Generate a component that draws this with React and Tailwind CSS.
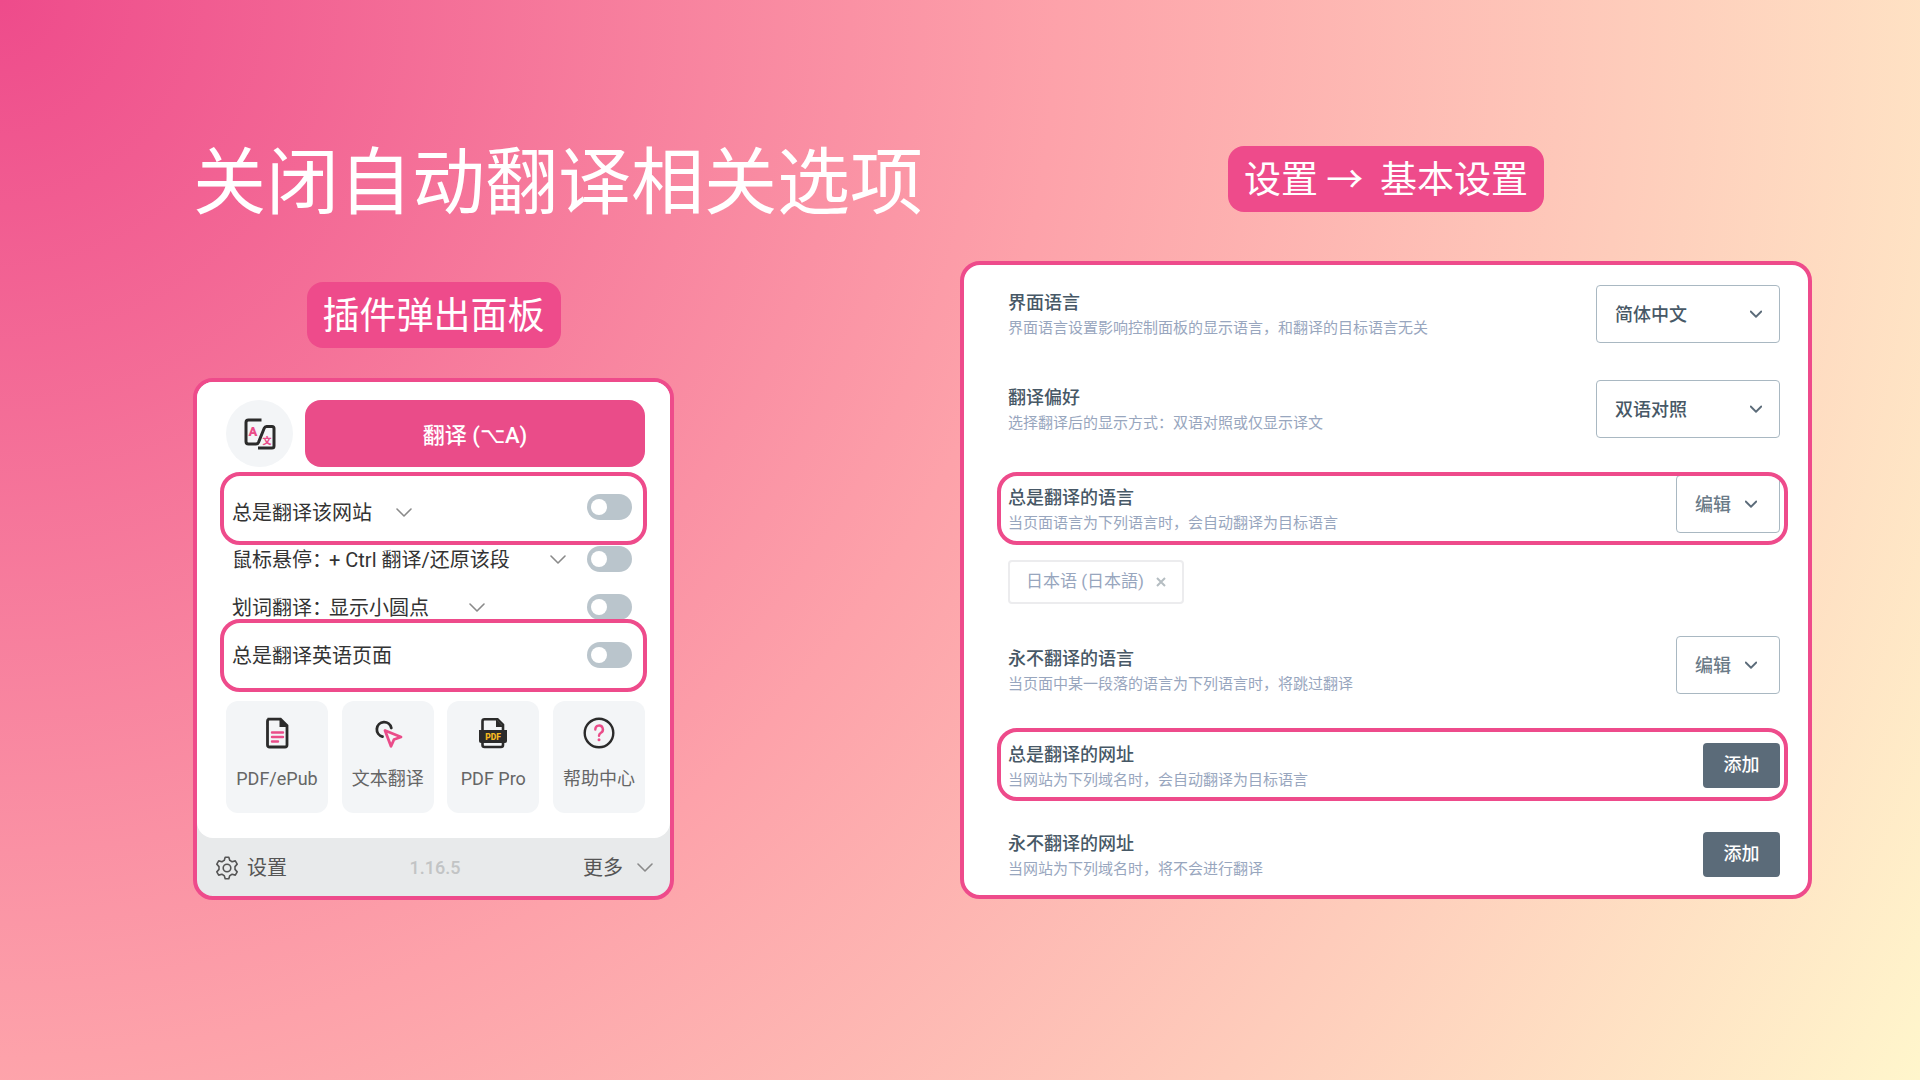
import React, { useState } from "react";

const POPUP_TILES = [
  { id: "epub", label: "PDF/ePub", icon: "doc", width: "w-[102px]" },
  { id: "text", label: "文本翻译", icon: "cursor", width: "w-[92px]" },
  { id: "pro", label: "PDF Pro", icon: "pdf", width: "w-[92px]" },
  { id: "help", label: "帮助中心", icon: "help", width: "w-[92px]" },
];

/* ─────────────────────────────────────────
   Icons
───────────────────────────────────────── */
const Chevron = ({ className, width = 2 }) => (
  <svg viewBox="0 0 16 10" className={className} fill="none" stroke="currentColor" strokeWidth={width} aria-hidden="true">
    <path d="M1 1l7 7 7-7" strokeLinecap="round" strokeLinejoin="round" />
  </svg>
);

const LogoIcon = () => (
  <svg viewBox="0 0 32 32" className="w-8 h-8" fill="none" stroke="#2b2b2b" strokeWidth="3" aria-hidden="true">
    <path d="M17.500 2H4.500Q2 2 2 4.500v19Q2 26 4.500 26H12q1.800 0 2.500-1.600L20.300 10Q21 8.400 22.500 8.400H28q2 0 2 2V28q0 2-2 2H14" />
    <text x="4.500" y="17.500" fontSize="13" fontWeight="900" fill="#ea4c89" stroke="none" fontFamily="Roboto">A</text>
    <text x="18.500" y="26" fontSize="9" fontWeight="900" fill="#ea4c89" stroke="none" fontFamily="Noto Sans CJK SC">文</text>
  </svg>
);

const GearIcon = () => (
  <svg viewBox="0 0 24 24" className="w-6 h-6" fill="none" stroke="currentColor" strokeWidth="1.6" strokeLinejoin="round" aria-hidden="true">
    <path d="M10.200 1.200h3.600l1 3.200 2.300 1.300 3.200-.8 1.900 3.200-2.200 2.500v2.800l2.200 2.500-1.900 3.200-3.200-.8-2.300 1.300-1 3.200h-3.600l-1-3.200-2.300-1.300-3.200.8-1.900-3.200 2.200-2.500v-2.800L1.800 8.100l1.900-3.200 3.200.8 2.300-1.300z" />
    <circle cx="12" cy="12" r="3.800" />
  </svg>
);

const TileIcon = ({ name }) => {
  if (name === "doc") {
    return (
      <svg viewBox="0 0 32 32" className="w-8 h-8" fill="none" strokeWidth="2.800" aria-hidden="true">
        <path d="M6.500 2.200h13l6.500 6.500v19.300q0 2-2 2h-15.500q-2 0-2-2V4.200q0-2 2-2z" stroke="#2b2b2b" />
        <path d="M18.500 2v8h8z" fill="#2b2b2b" />
        <path d="M11 15.500h11M11 20h11M11 24.500h6" stroke="#ea4c89" strokeWidth="2.400" strokeLinecap="round" />
      </svg>
    );
  }
  if (name === "cursor") {
    return (
      <svg viewBox="0 0 32 32" className="w-8 h-8" fill="none" strokeWidth="2.800" strokeLinecap="round" strokeLinejoin="round" aria-hidden="true">
        <path d="M10.500 19.600A7.300 7.300 0 1 1 19.300 11" stroke="#2b2b2b" />
        <path d="M13 13.500l16 6.500-7 2.500-3 6.800z" stroke="#ea4c89" />
      </svg>
    );
  }
  if (name === "pdf") {
    return (
      <svg viewBox="0 0 32 32" className="w-8 h-8" fill="none" strokeWidth="2.600" aria-hidden="true">
        <path d="M7.500 2.200h13l5.500 5.500v20.300q0 2-2 2H7.500q-2 0-2-2V4.200q0-2 2-2z" stroke="#2b2b2b" />
        <path d="M19 2v8h7.500z" fill="#2b2b2b" />
        <path d="M2 13h28v11q0 2-2 2H4q-2 0-2-2z" fill="#2b2b2b" />
        <text x="16" y="22.500" textAnchor="middle" fontSize="8.500" fontWeight="900" fill="#f5b921" fontFamily="Roboto">PDF</text>
      </svg>
    );
  }
  return (
    <svg viewBox="0 0 32 32" className="w-8 h-8" fill="none" strokeWidth="2.400" strokeLinecap="round" aria-hidden="true">
      <circle cx="16" cy="16" r="14.300" stroke="#2b2b2b" />
      <path d="M12.300 12.500a3.800 3.800 0 1 1 5.700 3.200q-2 1.100-2 3.100" stroke="#ea4c89" />
      <circle cx="16" cy="22.800" r="1.500" fill="#ea4c89" />
    </svg>
  );
};

/* ─────────────────────────────────────────
   Shared pieces
───────────────────────────────────────── */
const Badge = ({ children }) => (
  <h2 className="h-[66px] px-4 rounded-2xl bg-[#ee4b8b] text-white text-[37px] leading-[62px] whitespace-pre">{children}</h2>
);

// Ring drawn over a row to call it out
const Ring = ({ className }) => (
  <span aria-hidden="true" className={`absolute h-[73px] border-4 border-[#ee4b8b] rounded-[20px] pointer-events-none ${className}`} />
);

const Toggle = ({ label }) => {
  const [on, setOn] = useState(false);
  return (
    <input
      type="checkbox"
      role="switch"
      aria-label={label}
      checked={on}
      onChange={() => setOn(!on)}
      className="relative appearance-none shrink-0 w-[45px] h-[26px] rounded-full bg-[#bac5cc] checked:bg-[#ee4b8b] before:absolute before:top-[5px] before:left-[4px] before:w-4 before:h-4 before:rounded-full before:bg-white checked:before:left-[25px]"
    />
  );
};

const InlineSelect = ({ label, value, space }) => (
  <span className="relative inline-flex items-center">
    <select aria-label={label} className={`appearance-none field-sizing-content bg-transparent ${space}`}>
      <option>{value}</option>
    </select>
    <Chevron className="absolute right-0 w-4 h-[10px] text-[#8a8a8a] pointer-events-none" width={1.6} />
  </span>
);

const HoverRow = ({ title, value, className }) => (
  <div className={`flex items-center justify-between ${className}`}>
    <div className="flex pt-[2px]">
      <span className="w-[97px] whitespace-nowrap">{title}：</span>
      <InlineSelect label={title} value={value} space="pr-14" />
    </div>
    <Toggle label={title} />
  </div>
);

/* ─────────────────────────────────────────
   Extension popup
───────────────────────────────────────── */
const PopupPanel = () => (
  <section className="w-full rounded-[20px] border-4 border-[#ee4b8b] bg-[#e8eaeb] overflow-hidden font-['Roboto','Noto_Sans_CJK_SC',sans-serif] text-xl leading-[26px] text-[#333]">
    <div className="bg-white rounded-b-2xl pl-[29px] pr-[25px] pt-[18px] pb-[25px]">
      <div className="flex gap-3">
        <button aria-label="语言" className="flex items-center justify-center shrink-0 w-[67px] h-[67px] rounded-full bg-[#f3f5f7]">
          <LogoIcon />
        </button>
        <button className="flex-1 h-[67px] pt-1 rounded-2xl bg-[#ea4c89] text-white text-[22px] font-medium">翻译 (⌥A)</button>
      </div>

      <div className="pl-[6px] pr-[13px]">
        <div className="relative flex items-start justify-between mt-[27px]">
          <div className="flex pt-[6px]">
            <InlineSelect label="网站规则" value="总是翻译该网站" space="pr-10" />
          </div>
          <Toggle label="总是翻译该网站" />
          <Ring className="-left-3 -right-[15px] -top-[22px]" />
        </div>
        <HoverRow title="鼠标悬停" value="+ Ctrl 翻译/还原该段" className="mt-[19px]" />
        <HoverRow title="划词翻译" value="显示小圆点" className="mt-5" />
        <div className="relative flex items-center justify-between mt-5">
          <span className="pt-[2px]">总是翻译英语页面</span>
          <Toggle label="总是翻译英语页面" />
          <Ring className="-left-3 -right-[15px] -top-[22px]" />
        </div>
      </div>

      <div className="flex justify-between mt-8">
        {POPUP_TILES.map(tile => (
          <button key={tile.id} className={`flex flex-col items-center h-[112px] pt-4 rounded-xl bg-[#f3f5f7] text-lg leading-6 text-[#666] whitespace-nowrap ${tile.width}`}>
            <TileIcon name={tile.icon} />
            <span className="mt-[18px]">{tile.label}</span>
          </button>
        ))}
      </div>
    </div>

    <footer className="flex items-center justify-between h-[58px] pt-px pl-[18px] pr-[17px] text-[#555]">
      <button className="flex items-center gap-2">
        <GearIcon />
        <span>设置</span>
      </button>
      <span className="text-lg font-medium text-[#c2c4c5]">1.16.5</span>
      <button className="flex items-center gap-[14px]">
        <span>更多</span>
        <Chevron className="w-4 h-[10px] text-[#8a8a8a]" width={1.6} />
      </button>
    </footer>
  </section>
);

/* ─────────────────────────────────────────
   Settings page
───────────────────────────────────────── */
const SettingText = ({ title, desc, id, className }) => (
  <div className={className}>
    <label htmlFor={id} className="block text-lg leading-[26px] font-medium text-[#475866]">{title}</label>
    <p className="text-[15px] leading-6 text-[#98a6be]">{desc}</p>
  </div>
);

const SelectBox = ({ id, value, className, space }) => (
  <div className="relative shrink-0">
    <select id={id} className={`block appearance-none h-[58px] pl-[18px] pt-[2px] rounded border border-[#a9b8c2] bg-white text-lg font-medium ${className}`}>
      <option>{value}</option>
    </select>
    <Chevron className={`absolute top-[25px] w-3 h-[9px] text-[#5b6b79] pointer-events-none ${space}`} width={2.4} />
  </div>
);

const AddButton = ({ id }) => (
  <button id={id} className="shrink-0 w-[77px] h-[45px] rounded bg-[#5b6b79] text-white text-lg font-medium">添加</button>
);

const SettingsPanel = () => (
  <section className="w-full rounded-[20px] border-4 border-[#ee4b8b] bg-white pl-[44px] pr-7 pt-5 pb-[14px] font-['Roboto','Noto_Sans_CJK_SC',sans-serif]">
    <div className="flex items-start justify-between">
      <SettingText id="ui-lang" title="界面语言" desc="界面语言设置影响控制面板的显示语言，和翻译的目标语言无关" className="pt-[5px]" />
      <SelectBox id="ui-lang" value="简体中文" className="w-[184px] text-[#475866]" space="right-[18px]" />
    </div>
    <div className="flex items-start justify-between mt-[37px]">
      <SettingText id="mode" title="翻译偏好" desc="选择翻译后的显示方式：双语对照或仅显示译文" className="pt-[5px]" />
      <SelectBox id="mode" value="双语对照" className="w-[184px] text-[#475866]" space="right-[18px]" />
    </div>

    <div className="relative flex items-start justify-between mt-[37px]">
      <SettingText id="always-lang" title="总是翻译的语言" desc="当页面语言为下列语言时，会自动翻译为目标语言" className="pt-[10px]" />
      <SelectBox id="always-lang" value="编辑" className="w-[104px] text-[#6b7b88]" space="right-[23px]" />
      <Ring className="-left-[11px] -right-2 -top-[3px]" />
    </div>
    <div className="flex items-center gap-3 w-fit h-[44px] mt-[25px] px-4 border-2 border-[#ececee] rounded-sm text-[17px] text-[#98a6be]">
      <span>日本语 (日本語)</span>
      <button aria-label="移除" className="text-[#b5bdc2]">
        <svg viewBox="0 0 10 10" className="w-[10px] h-[10px]" stroke="currentColor" strokeWidth="2" aria-hidden="true">
          <path d="M1 1l8 8M9 1l-8 8" />
        </svg>
      </button>
    </div>

    <div className="flex items-start justify-between mt-8">
      <SettingText id="never-lang" title="永不翻译的语言" desc="当页面中某一段落的语言为下列语言时，将跳过翻译" className="pt-[10px]" />
      <SelectBox id="never-lang" value="编辑" className="w-[104px] text-[#6b7b88]" space="right-[23px]" />
    </div>
    <div className="relative flex items-center justify-between mt-[42px]">
      <SettingText id="always-url" title="总是翻译的网址" desc="当网站为下列域名时，会自动翻译为目标语言" className="pt-1" />
      <AddButton id="always-url" />
      <Ring className="-left-[11px] -right-2 -top-[10px]" />
    </div>
    <div className="flex items-center justify-between mt-[35px]">
      <SettingText id="never-url" title="永不翻译的网址" desc="当网站为下列域名时，将不会进行翻译" className="pt-1" />
      <AddButton id="never-url" />
    </div>
  </section>
);

const App = () => (
  <main
    lang="zh-CN"
    className="min-h-screen grid grid-cols-2 items-start pt-[146px] pb-[180px] font-['Noto_Sans_CJK_SC',sans-serif] bg-[radial-gradient(circle_farthest-corner_at_0_0,#ee4b8b_0%,#fda2aa_48%,#fff6cc_100%)]"
  >
    <div className="pl-[193px]">
      <h1 className="text-white text-[73px] leading-[60px] h-[66px] whitespace-nowrap">关闭自动翻译相关选项</h1>
      <div className="flex flex-col items-center gap-[30px] mt-[70px] max-w-[481px]">
        <Badge>插件弹出面板</Badge>
        <PopupPanel />
      </div>
    </div>
    <div className="flex flex-col items-center gap-[49px] pr-[108px]">
      <Badge>{"设置 →  基本设置"}</Badge>
      <SettingsPanel />
    </div>
  </main>
);

export default App;
